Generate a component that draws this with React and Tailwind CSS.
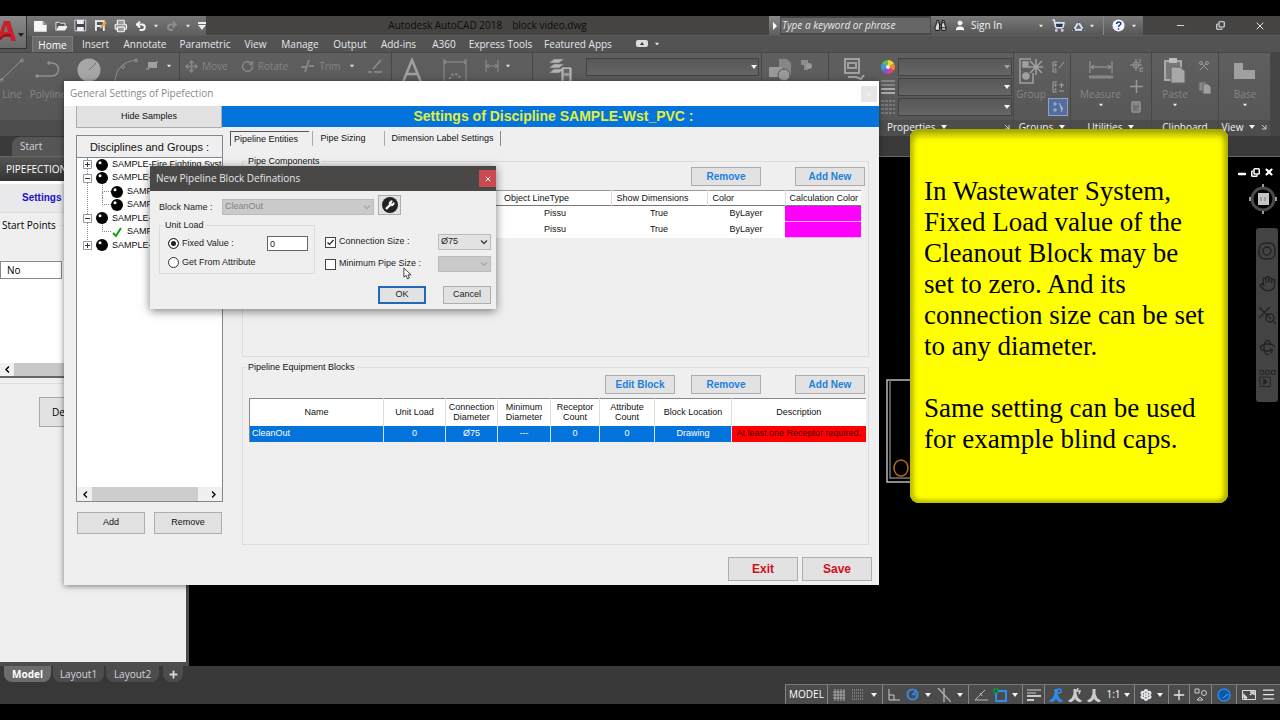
import { useState } from 'react'
import {
  Hand, Minus, X, Copy, Settings, Plus, Menu, Scissors, Files, Move, RotateCw,
  ShoppingCart, User, Binoculars, Calculator, Printer, Undo2, Redo2, Wrench, Rotate3d,
} from 'lucide-react'

const RIBBON_TABS = [
  ['Insert', 'w-[45px]'], ['Annotate', 'w-[54px]'], ['Parametric', 'w-[66px]'], ['View', 'w-[35px]'],
  ['Manage', 'w-[54px]'], ['Output', 'w-[46px]'], ['Add-ins', 'w-[51px]'], ['A360', 'w-[40px]'],
  ['Express Tools', 'w-[73px]'], ['Featured Apps', 'w-[82px]'],
]

const TREE = [
  { id: 1, label: 'SAMPLE-Fire Fighting System', box: '+' },
  { id: 2, label: 'SAMPLE-', box: '-' },
  { id: 3, label: 'SAMPLE', child: true },
  { id: 4, label: 'SAMPLE', child: true, last: true },
  { id: 5, label: 'SAMPLE-', box: '-' },
  { id: 6, label: 'SAMPLE', child: true, last: true, checked: true },
  { id: 7, label: 'SAMPLE-', box: '+' },
]

const BLOCK_COLUMNS = [
  ['Name', 'w-[134px]'], ['Unit Load', 'w-[62px]'], ['Connection Diameter', 'w-[52px]'],
  ['Minimum Diameter', 'w-[53px]'], ['Receptor Count', 'w-[49px]'], ['Attribute Count', 'w-[55px]'],
  ['Block Location', 'w-[77px]'], ['Description', 'w-[134px]'],
]

const BLOCK_ROW = ['CleanOut', '0', 'Ø75', '---', '0', '0', 'Drawing']

function Caret({ className = 'text-gray-100' }) {
  return (
    <svg viewBox="0 0 6 4" fill="currentColor" className={`w-[6px] h-[4px] shrink-0 ${className}`}>
      <path d="M0 0h6L3 4z" />
    </svg>
  )
}

function SmallCaret() {
  return <Caret className="text-gray-200 scale-75" />
}

function Chevron({ className = '' }) {
  return (
    <svg viewBox="0 0 8 5" fill="none" stroke="currentColor" strokeWidth="1.500" className={`w-[8px] h-[5px] ${className}`}>
      <path d="M1 .5l3 3 3-3" />
    </svg>
  )
}

function Corner() {
  return (
    <svg viewBox="0 0 6 6" fill="none" stroke="#ccc" className="w-[6px] h-[6px] shrink-0">
      <path d="M1 1l4 4M5 1v4H1" />
    </svg>
  )
}

/* ---------- title bar ---------- */

function TitleBar() {
  return (
    <header className="h-[20px] shrink-0 flex items-stretch bg-[#454442] border-b border-[#5c5c5c]">
      <div className="w-[27px]" />
      <div className="w-[179px] flex items-center pl-[7px] gap-[7px] bg-gradient-to-b from-[#777] to-[#5e5e5e] text-gray-100">
        <svg viewBox="0 0 14 12" className="w-[14px] h-[12px]"><path d="M0 1h9l4 4v7H0z" fill="#f5f5f5" /><path d="M9 1v4h4" fill="#999" /></svg>
        <svg viewBox="0 0 14 12" className="w-[13px] h-[12px]"><path d="M1 11V2h4l1 1h5v3" fill="#555" stroke="#eee" /><path d="M1 11l3-5h10l-3 5z" fill="#f0f0f0" /></svg>
        <svg viewBox="0 0 13 13" className="w-[13px] h-[13px]"><path d="M1 1h11v11H1z" fill="#3e4653" stroke="#d8d8d8" /><path d="M3 1h7v4H3zM3 8h7v4H3z" fill="#eee" /></svg>
        <svg viewBox="0 0 13 13" className="w-[13px] h-[13px]">
          <path d="M1 1h10v11H1z" fill="#e8e8e8" /><path d="M3 3h6v3H3zM3 8h6v4H3z" fill="#4b5563" />
          <path d="M6 8l5-6 2 2-5 5-2 1z" fill="#e8a43c" />
        </svg>
        <Printer className="w-[14px] h-[14px]" fill="#999" />
        <Undo2 className="w-[12px] h-[12px]" strokeWidth="4" />
        <SmallCaret />
        <Redo2 className="w-[12px] h-[12px] text-[#8c8c8c]" strokeWidth="4" />
        <SmallCaret />
        <svg viewBox="0 0 8 8" fill="#eee" className="w-[8px] h-[8px] shrink-0"><path d="M0 0h8v2H0zM0 3h8L4 8z" /></svg>
      </div>
      <div className="flex-1 flex items-center justify-center gap-[10px] text-[10px] text-[#0c0c0c] whitespace-nowrap">
        <span>Autodesk AutoCAD 2018</span>
        <span>block video.dwg</span>
      </div>
      <button aria-label="Expand search" className="w-[11px] bg-gradient-to-b from-[#8a8a8a] to-[#5e5e5e] flex items-center justify-center">
        <svg viewBox="0 0 4 8" fill="#fff" className="w-[4px] h-[8px]"><path d="M0 0l4 4-4 4z" /></svg>
      </button>
      <input
        aria-label="Search"
        placeholder="Type a keyword or phrase"
        className="w-[151px] my-px px-[1px] bg-[#666] border border-[#4a4a4a] text-[10px] italic placeholder:text-gray-200"
      />
      <div className="w-[212px] flex items-center pl-[3px] bg-gradient-to-b from-[#7a7a7a] to-[#565656] text-gray-100">
        <Binoculars className="w-[13px] h-[13px] text-[#222]" fill="#ddd" />
        <User className="w-[12px] h-[13px] ml-[7px]" fill="currentColor" />
        <button className="ml-[5px] text-[10px] whitespace-nowrap">Sign In</button>
        <span className="flex-1" />
        <SmallCaret />
        <ShoppingCart className="w-[13px] h-[13px] ml-[8px] text-[#dfe4f5]" strokeWidth="3" fill="#28355e" />
        <svg viewBox="0 0 14 12" fill="none" stroke="#dfe4f5" strokeWidth="2" className="w-[13px] h-[12px] ml-[7px]">
          <path d="M7 2L2 10h10z" /><path d="M7 1v2M1 10h2M11 10h2" stroke="#28355e" />
        </svg>
        <span className="ml-[4px]"><SmallCaret /></span>
        <span className="w-px self-stretch bg-[#888] ml-[8px]" />
        <svg viewBox="0 0 14 14" className="w-[13px] h-[13px] ml-[8px]">
          <circle cx="7" cy="7" r="6.500" fill="#f4f6ff" />
          <path d="M5 5.500c0-3 4.500-3 4.500-.5 0 1.500-2.500 1.500-2.500 3.500M7 10v1.500" fill="none" stroke="#1e3a8a" strokeWidth="1.600" />
        </svg>
        <span className="mx-[6px]"><SmallCaret /></span>
      </div>
      <div className="w-[137px] flex items-center justify-around pl-[17px] text-gray-200">
        <button aria-label="Minimize" className="w-[39px] flex justify-center"><Minus className="w-[11px] h-[11px]" /></button>
        <button aria-label="Restore" className="w-[39px] flex justify-center"><Copy className="w-[9px] h-[9px] -scale-x-100 rotate-180" strokeWidth="3" /></button>
        <button aria-label="Close" className="w-[39px] flex justify-center"><X className="w-[12px] h-[12px]" /></button>
      </div>
    </header>
  )
}

function RibbonTabs() {
  return (
    <nav className="h-[16px] shrink-0 flex items-stretch pl-[32px] bg-[#535353] text-[10px] text-gray-200 whitespace-nowrap">
      <button className="w-[41px] bg-[#6a6a6a] border border-b-0 border-[#7c7c7c] text-white leading-[14px]">Home</button>
      <div className="flex">
        {RIBBON_TABS.map(([label, width]) => (
          <button key={label} className={`${width} leading-[16px]`}>{label}</button>
        ))}
      </div>
      <div className="flex items-center pl-[17px] gap-[6px]">
        <svg viewBox="0 0 12 8" className="w-[12px] h-[8px]"><rect width="12" height="7" rx="2" fill="#ddd" /><path d="M4 5l2-3 2 3z" fill="#333" /></svg>
        <SmallCaret />
      </div>
    </nav>
  )
}

/* ---------- ribbon ---------- */

function Panel({ title, className, titleClass = 'justify-center px-[4px]', more = true, corner = false, children }) {
  return (
    <section className={`flex flex-col border-r border-[#474747] shrink-0 overflow-hidden ${className}`}>
      <div className="flex-1 flex items-start pt-[5px]">{children}</div>
      <div className={`h-[16px] flex items-center gap-[6px] bg-[#4d4d4d] text-[10px] leading-[14px] pb-[2px] text-gray-100 ${titleClass}`}>
        {title}
        {more && title && <Caret />}
        {corner && <span className="ml-auto"><Corner /></span>}
      </div>
    </section>
  )
}

function BigTool({ label, caret, className, children }) {
  return (
    <button className={`flex flex-col items-center shrink-0 text-[10px] leading-[14px] text-[#858585] ${className}`}>
      <span className="h-[29px] flex items-start">{children}</span>
      {label}
      {caret && <span className="h-[8px] flex items-center"><SmallCaret /></span>}
    </button>
  )
}

function SmallTool({ label, children }) {
  return (
    <button className="flex items-center gap-[4px] text-[10px] leading-[16px] text-[#858585]">
      {children}{label}
    </button>
  )
}

function RibbonSelect({ label, dim, className = '' }) {
  return (
    <div className={`relative h-[18px] ${className}`}>
      <select aria-label={label} className="appearance-none w-full h-full bg-gradient-to-b from-[#575757] to-[#666] border border-[#424242]" />
      <span className="absolute right-[2px] top-[7px] flex pointer-events-none"><Caret className={dim ? 'text-gray-400' : 'text-gray-100'} /></span>
    </div>
  )
}

function Ribbon() {
  return (
    <div className="h-[84px] shrink-0 flex bg-gradient-to-b from-[#5f5f5f] to-[#555] border-t border-[#474747]">
      <Panel title="" className="w-[180px]">
        <BigTool label="Line" className="w-[24px]">
          <svg viewBox="0 0 24 24" fill="none" stroke="#909090" className="w-[24px] h-[24px]"><path d="M1 22L22 2" /><circle cx="22" cy="2.500" r="1.500" /><circle cx="1.500" cy="22" r="1.500" /></svg>
        </BigTool>
        <BigTool label="Polyline" className="w-[48px]">
          <svg viewBox="0 0 26 24" fill="none" stroke="#909090" strokeWidth="1.500" className="w-[26px] h-[24px]"><path d="M1 18h16a6 6 0 0 0 0-13h-3" /><circle cx="2" cy="18" r="1" /><circle cx="14" cy="5" r="1" /></svg>
        </BigTool>
        <BigTool className="w-[34px]">
          <svg viewBox="0 0 24 24" className="w-[24px] h-[24px]"><circle cx="12" cy="12" r="11.500" fill="#a6a6a6" /><path d="M12 12l7-7" stroke="#777" /></svg>
        </BigTool>
        <BigTool className="w-[40px]">
          <svg viewBox="0 0 24 24" fill="none" stroke="#909090" className="w-[24px] h-[24px]"><path d="M1 23C2 10 10 3 23 2" /><circle cx="9" cy="9" r="1.500" /><circle cx="22" cy="2.500" r="1.500" /></svg>
        </BigTool>
        <div className="flex items-center gap-[8px] pt-[3px]">
          <svg viewBox="0 0 12 9" className="w-[12px] h-[9px]"><path d="M2 1h9v6H2z" fill="#a0a0a0" /><path d="M0 8h3M10 1h2" stroke="#aaa" /></svg>
          <SmallCaret />
        </div>
      </Panel>

      <Panel title="" className="w-[212px]">
        <div className="flex items-center pl-[5px] gap-[13px]">
          <SmallTool label="Move"><Move className="w-[13px] h-[13px]" strokeWidth="3" /></SmallTool>
          <SmallTool label="Rotate"><RotateCw className="w-[13px] h-[13px]" strokeWidth="3" /></SmallTool>
          <SmallTool label="Trim">
            <svg viewBox="0 0 14 12" fill="none" stroke="currentColor" strokeWidth="2" className="w-[14px] h-[12px]"><path d="M0 7h5M8 6h5M4 12L8 0" /></svg>
          </SmallTool>
          <span className="-ml-[5px]"><SmallCaret /></span>
          <svg viewBox="0 0 14 14" fill="none" stroke="#909090" strokeWidth="1.500" className="w-[14px] h-[14px] shrink-0"><path d="M0 13h4M6 13h8M5 10l8-9" /></svg>
        </div>
      </Panel>

      <Panel title="" className="w-[141px]">
        <BigTool className="w-[40px]">
          <svg viewBox="0 0 20 24" fill="none" stroke="#a0a0a0" strokeWidth="2.500" className="w-[20px] h-[24px]"><path d="M1 24L10 2l9 22M4 16h12" /></svg>
        </BigTool>
        <BigTool className="w-[46px]">
          <svg viewBox="0 0 24 24" fill="none" stroke="#909090" className="w-[24px] h-[24px]"><path d="M1 1v22M23 1v22M1 4h22M3 2L1 4l2 2M21 2l2 2-2 2" /><path d="M7 21a5 5 0 0 1 10 0" strokeWidth="2" strokeDasharray="2 2" /></svg>
        </BigTool>
        <div className="flex items-center gap-[6px] pt-[2px] pl-[7px]">
          <svg viewBox="0 0 14 12" fill="none" stroke="#909090" className="w-[14px] h-[12px]"><path d="M1 0v12M13 0v12M1 6h12M4 4L1 6l3 2M10 4l3 2-3 2" /></svg>
          <SmallCaret />
        </div>
      </Panel>

      <Panel title="" className="w-[229px]">
        <svg viewBox="0 0 24 26" className="w-[24px] h-[26px] ml-[15px] shrink-0">
          <path d="M6 1h10l-5 4H1zM6 6h10l-5 4H1zM6 11h10l-5 4H1z" fill="#b4b4b4" stroke="#666" strokeWidth=".5" />
          <path d="M14 10h9v15h-9z" fill="#999" stroke="#ccc" /><path d="M16 11h5v4h-5zM16 18h5v6h-5z" fill="#666" />
        </svg>
        <RibbonSelect label="Layer" className="flex-1 ml-[14px] mr-[2px]" />
      </Panel>

      <Panel title="" className="w-[67px]">
        <div className="flex items-start gap-[8px] pl-[6px] text-[#999]">
          <svg viewBox="0 0 24 24" fill="currentColor" className="w-[24px] h-[24px]"><path d="M11 1h8l4 4v12H11z" opacity=".7" /><path d="M1 9h13v10H1z" /><circle cx="16" cy="17" r="6" stroke="#5a5a5a" /></svg>
          <svg viewBox="0 0 12 12" fill="currentColor" className="w-[12px] h-[12px]"><path d="M1 2h7v5H1zM4 6h4v6H4z" opacity=".8" /><circle cx="9" cy="8" r="3" /></svg>
        </div>
      </Panel>

      <Panel title="Properties" corner className="w-[185px]" titleClass="pl-[58px] pr-[3px]">
        <div className="w-[52px] pl-[14px]">
          <svg viewBox="0 0 22 24" fill="none" stroke="#a0a0a0" strokeWidth="2" className="w-[22px] h-[24px]"><path d="M2 1h14v14H2zM5 5h8v5H5zM5 19h9M13 19l5 2 3-4" /></svg>
        </div>
        <div className="flex-1 flex flex-col gap-[2px] pr-[1px]">
          <div className="flex items-center gap-[3px]">
            <svg viewBox="0 0 14 14" className="w-[14px] h-[14px]">
              <path d="M7 7V0a7 7 0 0 1 6 3.500z" fill="#f1d13c" /><path d="M7 7l6-3.500a7 7 0 0 1 0 7z" fill="#ef8a2e" />
              <path d="M7 7l6 3.500A7 7 0 0 1 7 14z" fill="#d8418c" /><path d="M7 7v7a7 7 0 0 1-6-3.500z" fill="#8656c9" />
              <path d="M7 7l-6 3.500a7 7 0 0 1 0-7z" fill="#3a9be0" /><path d="M7 7L1 3.500A7 7 0 0 1 7 0z" fill="#62bd55" />
              <circle cx="7" cy="7" r="2" fill="#eee" />
            </svg>
            <RibbonSelect label="Object color" dim className="flex-1" />
          </div>
          <div className="flex items-center gap-[3px]">
            <svg viewBox="0 0 14 14" stroke="#aaa" className="w-[14px] h-[14px]"><path d="M0 1h14M0 5h14" /><path d="M0 9h14M0 13h14" strokeWidth="2" /></svg>
            <RibbonSelect label="Lineweight" className="flex-1" />
          </div>
          <div className="flex items-center gap-[3px]">
            <svg viewBox="0 0 14 14" stroke="#999" strokeDasharray="3 1" className="w-[14px] h-[14px]"><path d="M0 1h14M0 5h14M0 9h14M0 13h14" /></svg>
            <RibbonSelect label="Linetype" className="flex-1" />
          </div>
        </div>
      </Panel>

      <Panel title="Groups" className="w-[57px]">
        <BigTool label="Group" className="w-[34px]">
          <svg viewBox="0 0 24 26" fill="none" stroke="#a0a0a0" strokeWidth="1.500" className="w-[24px] h-[26px]"><path d="M12 1H1v24h13V15" /><path d="M4 4h5v5H4z" fill="#a0a0a0" /><circle cx="7" cy="18" r="3" fill="#a0a0a0" /><path d="M17 1v16M9 9h15M11 3l12 12M23 3L11 15" /></svg>
        </BigTool>
        <div className="flex flex-col gap-[2px] text-[#a0a0a0]">
          <button aria-label="Ungroup" className="w-[20px] h-[18px] flex items-center justify-center">
            <svg viewBox="0 0 12 12" stroke="currentColor" fill="none" className="w-[12px] h-[12px]"><path d="M5 1H1v10h4M3 3h1v2H3zM3 8h1v1H3zM12 1L7 7" /></svg>
          </button>
          <button aria-label="Group edit" className="w-[20px] h-[18px] flex items-center justify-center">
            <svg viewBox="0 0 12 12" stroke="currentColor" fill="none" className="w-[12px] h-[12px]"><path d="M5 1H1v10h4M3 3h1v2H3zM3 8h1v1H3zM7 4h5M9.500 2v5M7 10h5" /></svg>
          </button>
          <button aria-label="Group selection" className="w-[20px] h-[18px] flex items-center justify-center bg-[#566d9b] border border-[#8ba3d0]">
            <svg viewBox="0 0 12 12" stroke="#a9b7d4" fill="none" className="w-[12px] h-[12px]"><path d="M2 2h2v2H2zM2 8h2v2H2z" /><path d="M7 2l4 6H9l1 3" fill="#a9b7d4" /></svg>
          </button>
        </div>
      </Panel>

      <Panel title="Utilities" className="w-[81px]">
        <BigTool label="Measure" caret className="w-[59px]">
          <svg viewBox="0 0 24 24" fill="none" stroke="#a0a0a0" className="w-[24px] h-[24px]"><path d="M1 3v12M23 3v12M2 9h20M5 7L2 9l3 2M19 7l3 2-3 2" /><path d="M0 19h24" strokeWidth="3" stroke="#888" /></svg>
        </BigTool>
        <div className="flex flex-col gap-[8px] pt-[1px] text-[#999]">
          <svg viewBox="0 0 13 13" fill="none" stroke="currentColor" className="w-[13px] h-[13px]"><circle cx="6" cy="6" r="3" /><path d="M0 6h12M6 0v12M10 0v4M10 9h3v4h-3z" /></svg>
          <svg viewBox="0 0 13 13" fill="none" stroke="currentColor" strokeWidth="1.500" className="w-[13px] h-[13px]"><path d="M0 6.500h13M6.500 0v13" /></svg>
          <Calculator className="w-[12px] h-[12px]" strokeWidth="3" />
        </div>
      </Panel>

      <Panel title="Clipboard" more={false} className="w-[67px]">
        <BigTool label="Paste" caret className="w-[46px]">
          <svg viewBox="0 0 22 26" className="w-[22px] h-[26px]"><path d="M1 3h16v19H1z" fill="#777" stroke="#a8a8a8" strokeWidth="2" /><path d="M5 0h8v5H5z" fill="#bbb" /><path d="M7 9h9l5 4v12H7z" fill="#a8a8a8" stroke="#666" /></svg>
        </BigTool>
        <div className="flex flex-col gap-[9px] pt-[2px] text-[#999]">
          <Scissors className="w-[12px] h-[12px] rotate-90" strokeWidth="2" />
          <svg viewBox="0 0 13 13" stroke="#666" className="w-[13px] h-[13px]"><path d="M1 1h7v9H1z" fill="#888" /><path d="M5 3h5l3 3v7H5z" fill="#a0a0a0" /></svg>
        </div>
      </Panel>

      <Panel title="View" corner className="w-[52px]">
        <BigTool label="Base" caret className="w-[52px]">
          <svg viewBox="0 0 22 24" className="w-[22px] h-[24px]"><path d="M0 5h9v7h12v9H0z" fill="#a0a0a0" /></svg>
        </BigTool>
      </Panel>
      <div className="flex-1 bg-[#454545]" />
    </div>
  )
}

/* ---------- left palette ---------- */

function Palette() {
  return (
    <aside className="w-[189px] shrink-0 flex flex-col bg-[#efefef] border-r-[3px] border-b-[4px] border-[#4c4c4c] text-[10px] overflow-hidden">
      <h2 className="h-[24px] shrink-0 pl-[6px] leading-[24px] bg-gradient-to-b from-[#555] to-[#333] text-white">PIPEFECTION</h2>
      <div className="h-[31px] shrink-0 border-t-[3px] border-white bg-[#e9e9ec] pl-[22px]">
        <button className="font-bold text-[#1a10c8] font-['Liberation_Sans',sans-serif] leading-[28px]">Settings</button>
      </div>
      <div className="h-[49px] shrink-0 pt-[5px] border-t border-[#ddd]">
        <div className="flex items-center gap-[3px] pl-[2px]">Start Points <span className="flex-1 h-px bg-[#ddd]" /></div>
      </div>
      <div className="h-[117px] shrink-0 flex flex-col bg-white border-b-2 border-[#666]">
        <div className="h-[18px] w-[62px] shrink-0 border border-[#888] pl-[6px] leading-[16px]">No</div>
        <div className="flex-1" />
        <div className="h-[13px] flex bg-[#f0f0f0]">
          <span className="w-[14px] flex items-center justify-center"><Chevron className="rotate-90" /></span>
          <span className="flex-1 bg-[#c8c8c8]" />
        </div>
      </div>
      <div className="mt-[5px] border-t border-[#ddd] pt-[13px] pl-[39px]">
        <button className="h-[30px] w-[80px] bg-[#e2e2e2] border border-[#aaa] text-left pl-[12px]">De</button>
      </div>
    </aside>
  )
}

/* ---------- drawing area ---------- */

function NavBar() {
  return (
    <div className="w-[22px] h-[174px] rounded-[3px] bg-[#434343] text-[#242424] flex flex-col items-center justify-between py-[14px]">
      <svg viewBox="0 0 18 18" fill="none" stroke="currentColor" strokeWidth="1.500" className="w-[18px] h-[18px]"><rect x="1" y="1" width="16" height="16" rx="6" /><circle cx="9" cy="9" r="4" /></svg>
      <Hand className="w-[17px] h-[17px]" />
      <svg viewBox="0 0 18 18" fill="none" stroke="currentColor" strokeWidth="1.500" className="w-[18px] h-[18px]"><path d="M1 1l12 12M12 1L1 12" /><circle cx="12" cy="12" r="4" /><path d="M15 15l3 3" /></svg>
      <Rotate3d className="w-[17px] h-[17px]" />
      <svg viewBox="0 0 18 18" fill="none" stroke="currentColor" className="w-[17px] h-[18px]"><path d="M1 0h4v4H1zM7 0h4v4H7zM13 0h4v4h-4zM1 7h11v10H1z" /><path d="M5 9l4 3-4 3z" fill="currentColor" /></svg>
    </div>
  )
}

function Canvas() {
  return (
    <main className="relative flex-1 bg-black">
      <div className="flex flex-col items-end pt-[8px]">
        <div className="flex items-center gap-[4px] pr-[6px] text-white">
          <Minus className="w-[10px] h-[10px] mt-[4px]" strokeWidth="6" />
          <Copy className="w-[9px] h-[9px] -scale-x-100 rotate-180" strokeWidth="4" />
          <X className="w-[10px] h-[10px]" strokeWidth="5" />
        </div>
        <svg viewBox="0 0 28 30" fill="none" className="w-[28px] h-[30px] mt-[5px] mr-[3px]">
          <circle cx="14" cy="15" r="11" stroke="#4a4a4a" strokeWidth="3" />
          <rect x="9" y="9" width="11" height="12" fill="#c4c4c4" />
          <path d="M12 13v4M16 13v4" stroke="#777" />
          <path d="M14 0v3M14 27v3M1 13v4M27 13v4" stroke="#ccc" strokeWidth="1.500" />
        </svg>
        <div className="mt-[14px] mr-[2px]"><NavBar /></div>
      </div>
      <svg viewBox="0 0 60 105" fill="none" className="absolute left-[697px] top-[222px] w-[60px] h-[105px]">
        <path d="M60 1H1v102h59" stroke="#bbb" strokeWidth="1.500" /><path d="M4 1v98h56" stroke="#777" strokeWidth="1.500" />
        <ellipse cx="15" cy="89" rx="7" ry="8" stroke="#b5651d" strokeWidth="1.500" />
      </svg>
    </main>
  )
}

/* ---------- bottom bars ---------- */

function LayoutTabs() {
  return (
    <div className="h-[18px] shrink-0 flex bg-[#383838] text-[10px] text-gray-300">
      <button className="w-[47px] ml-[4px] rounded-b-lg bg-[#6c6c6c] font-bold text-white leading-[16px] mb-[2px]">Model</button>
      <button className="w-[51px] ml-[2px] rounded-b-lg bg-[#4c4c4c] leading-[16px] mb-[2px]">Layout1</button>
      <button className="w-[53px] ml-[2px] rounded-b-lg bg-[#4c4c4c] leading-[16px] mb-[2px]">Layout2</button>
      <button aria-label="New layout" className="w-[20px] ml-[4px] rounded-b-lg bg-[#4c4c4c] mb-[2px] flex items-center justify-center">
        <Plus className="w-[11px] h-[11px]" strokeWidth="4" />
      </button>
    </div>
  )
}

function StatusGroup({ className, children }) {
  return <div className={`flex items-center justify-around border-l border-[#858585] px-[2px] ${className}`}>{children}</div>
}

function Figure({ color, children }) {
  return (
    <svg viewBox="0 0 14 14" fill="none" stroke={color} strokeWidth="1.500" className="w-[14px] h-[14px]">
      <path d="M7 1v6M7 6l-2 5-4 3M7 6l2 5 4 3" strokeWidth="3" />{children}
    </svg>
  )
}

function StatusBar() {
  return (
    <footer className="h-[20px] shrink-0 flex justify-end bg-[#383838] text-gray-200 text-[10px]">
      <div className="flex bg-[#4b4b4b] border-t border-[#777]">
        <StatusGroup className="w-[42px]"><button className="text-white">MODEL</button></StatusGroup>
        <StatusGroup className="w-[55px]">
          <svg viewBox="0 0 12 12" stroke="#bbb" className="w-[12px] h-[12px]"><path d="M2 0v12M5 0v12M8 0v12M11 0v12M0 3h12M0 6h12M0 9h12" strokeWidth=".8" /></svg>
          <svg viewBox="0 0 12 12" stroke="#aaa" strokeDasharray="1 1" className="w-[12px] h-[12px]"><path d="M0 1h12M0 4h12M0 7h12M0 10h12" /></svg>
          <Caret />
        </StatusGroup>
        <StatusGroup className="w-[86px]">
          <svg viewBox="0 0 12 12" fill="none" stroke="#ccc" className="w-[12px] h-[12px]"><path d="M1 0v11h11M1 6h5v5" /></svg>
          <svg viewBox="0 0 14 14" fill="none" stroke="#2f8cf0" strokeWidth="2" className="w-[13px] h-[13px]"><circle cx="7" cy="7" r="5.500" /><path d="M7 7h4M7 7l4-4" strokeWidth="1.500" /></svg>
          <Caret />
          <svg viewBox="0 0 14 14" fill="none" stroke="#aaa" className="w-[14px] h-[14px]"><path d="M1 0l13 14M7 0v14" strokeWidth="1.500" /></svg>
          <Caret />
        </StatusGroup>
        <StatusGroup className="w-[54px]">
          <svg viewBox="0 0 14 12" fill="none" stroke="#bbb" className="w-[14px] h-[12px]"><path d="M14 11H1L11 1M6 4l2 3" /></svg>
          <svg viewBox="0 0 14 14" fill="none" className="w-[14px] h-[14px]"><path d="M3 3h10v10H3z" stroke="#2f8cf0" strokeWidth="2" /><path d="M1 1h4v4H1z" fill="#063" stroke="#1a4" /></svg>
          <Caret />
        </StatusGroup>
        <StatusGroup className="w-[22px]">
          <svg viewBox="0 0 14 12" stroke="#ccc" strokeWidth="2" className="w-[14px] h-[12px]"><path d="M0 1h14M0 4h9" strokeWidth="1" /><path d="M0 7h14M0 11h7" /></svg>
        </StatusGroup>
        <StatusGroup className="w-[90px]">
          <Figure color="#2f8cf0"><circle cx="10" cy="3" r="2" /></Figure>
          <Figure color="#ccc"><path d="M10 0l-1 3h3l-1 3" /></Figure>
          <Figure color="#ccc" />
          <button className="flex items-center gap-[3px] text-white">1:1 <Caret /></button>
        </StatusGroup>
        <StatusGroup className="w-[34px]">
          <Settings className="w-[12px] h-[12px]" strokeWidth="4" /><Caret />
        </StatusGroup>
        <StatusGroup className="w-[21px]"><Plus className="w-[16px] h-[16px]" strokeWidth="2" /></StatusGroup>
        <StatusGroup className="w-[22px]">
          <svg viewBox="0 0 13 13" fill="none" stroke="#ccc" className="w-[13px] h-[13px]"><path d="M1 1h4v4H1zM6 9l3 3H3z" /><circle cx="10" cy="5" r="2.500" /></svg>
        </StatusGroup>
        <StatusGroup className="w-[25px]">
          <svg viewBox="0 0 14 14" className="w-[14px] h-[14px]"><circle cx="7" cy="7" r="6" fill="#0b57a8" stroke="#2688ee" strokeWidth="1.500" /><path d="M6 10l5-4" stroke="#5eb0ff" /></svg>
        </StatusGroup>
        <StatusGroup className="w-[44px]">
          <svg viewBox="0 0 14 12" fill="none" stroke="#ddd" className="w-[14px] h-[12px]"><path d="M.5 1.500h13v9H.5z" /><path d="M8 3h4v3M12 3L8 6M2 9h3M2 9V6l3 3" strokeWidth="1.500" /></svg>
          <Menu className="w-[15px] h-[15px]" />
        </StatusGroup>
      </div>
    </footer>
  )
}

/* ---------- settings window ---------- */

function WinButton({ className = '', children, ...rest }) {
  return (
    <button className={`bg-[#e2e2e2] border border-[#adadad] ${className}`} {...rest}>{children}</button>
  )
}

function Tree() {
  return (
    <div className="h-[367px] w-[147px] flex flex-col border border-[#828790] bg-white overflow-hidden">
      <h3 className="h-[22px] shrink-0 bg-[#efefef] border-b border-[#828790] text-[11px] leading-[22px] text-center">Disciplines and Groups :</h3>
      <ul className="relative h-[94px] shrink-0 grid grid-rows-7">
        <li aria-hidden="true" className="absolute left-[10px] top-0 bottom-[6px] border-l border-dotted border-[#888]" />
        {TREE.map((node) => (
          <li key={node.id} className="relative flex items-center whitespace-nowrap">
            {node.child ? (
              <span className="self-stretch w-[34px] pl-[25px] flex flex-col">
                <span className="h-1/2 border-l border-b border-dotted border-[#888]" />
                {!node.last && <span className="h-1/2 border-l border-dotted border-[#888]" />}
              </span>
            ) : (
              <span className="w-[19px] pl-[6px]">
                <svg viewBox="0 0 9 9" fill="#fff" stroke="#999" className="w-[9px] h-[9px]">
                  <path d="M.5.5h8v8h-8z" /><path d={node.box === '+' ? 'M2 4.500h5M4.500 2v5' : 'M2 4.500h5'} stroke="#235" />
                </svg>
              </span>
            )}
            {node.checked ? (
              <svg viewBox="0 0 12 12" fill="none" stroke="#169b1c" strokeWidth="2" className="w-[12px] h-[12px]"><path d="M2 7l3 3 5-8" /></svg>
            ) : (
              <svg viewBox="0 0 12 12" className="w-[12px] h-[12px]"><circle cx="6" cy="6" r="6" /><circle cx="4" cy="3.800" r="1.500" fill="#fff" /></svg>
            )}
            <span className="ml-[4px]">{node.label}</span>
          </li>
        ))}
      </ul>
      <div className="flex-1" />
      <div className="h-[14px] flex bg-[#f0f0f0]">
        <button aria-label="Scroll left" className="w-[15px] flex items-center justify-center"><Chevron className="rotate-90" /></button>
        <span className="w-[106px] bg-[#cdcdcd]" />
        <span className="flex-1" />
        <button aria-label="Scroll right" className="w-[17px] flex items-center justify-center"><Chevron className="-rotate-90" /></button>
      </div>
    </div>
  )
}

function ComponentsTable() {
  const cell = 'h-[16px] p-0 text-center'
  return (
    <table className="table-fixed w-[612px] border-collapse bg-white border-t border-[#999]">
      <thead>
        <tr className="h-[15px] leading-[12px] border-b border-[#777] text-left">
          <th className="w-[250px] p-0" />
          <th className="w-[112px] p-0 pl-[5px] font-normal">Object LineType</th>
          <th className="w-[96px] p-0 pl-[5px] font-normal border-l border-[#ddd]">Show Dimensions</th>
          <th className="w-[78px] p-0 pl-[5px] font-normal border-l border-[#ddd]">Color</th>
          <th className="p-0 pl-[4px] font-normal border-l border-[#ddd] whitespace-nowrap">Calculation Color</th>
        </tr>
      </thead>
      <tbody>
        {[1, 2].map((n) => (
          <tr key={n}>
            <td className={cell} />
            <td className={cell}>Pissu</td>
            <td className={cell}>True</td>
            <td className={cell}>ByLayer</td>
            <td className={`${cell} bg-[#ff00ff] border-b border-[#ffb0ff]`} />
          </tr>
        ))}
      </tbody>
    </table>
  )
}

function BlocksTable() {
  return (
    <table className="table-fixed w-[616px] border-collapse border-t border-l border-[#888]">
      <thead>
        <tr className="h-[27px] bg-white">
          {BLOCK_COLUMNS.map(([label, width]) => (
            <th key={label} className={`${width} p-0 font-normal leading-[10px] border-r border-[#ddd] last:border-r-0`}>{label}</th>
          ))}
        </tr>
      </thead>
      <tbody>
        <tr className="h-[16px] bg-[#0473dc] text-white text-center">
          {BLOCK_ROW.map((value, i) => (
            <td key={i} className="p-0 border-r border-[#cfe3f8] first:text-left first:pl-[2px]">{value}</td>
          ))}
          <td className="p-0 bg-[#f00] text-[#4a0000] whitespace-nowrap">At least one Receptor required.</td>
        </tr>
      </tbody>
    </table>
  )
}

function Group({ title, className, children }) {
  return (
    <fieldset className={`border border-[#dcdcdc] min-w-0 ${className}`}>
      <legend className="ml-[3px] px-[2px] h-[12px] leading-[12px]">{title}</legend>
      {children}
    </fieldset>
  )
}

function SettingsWindow() {
  const action = 'w-[70px] h-[19px] text-[10px] font-bold text-[#2180dd]'
  const big = 'w-[70px] h-[24px] text-[12px] font-bold text-[#d01020]'
  return (
    <section className="absolute left-[64px] top-[81px] w-[815px] h-[504px] flex flex-col bg-[#efefef] shadow-[0_1px_6px_rgba(0,0,0,0.500)] font-['Liberation_Sans',sans-serif] text-[9px] text-[#111]">
      <header className="h-[25px] shrink-0 flex items-center justify-between bg-white pl-[6px] pr-[2px] font-['Open_Sans',sans-serif] text-[10px] text-[#888]">
        General Settings of Pipefection
        <button aria-label="Close window" className="w-[16px] h-[16px] bg-[#e6e6e6] text-white flex items-center justify-center"><X className="w-[8px] h-[8px]" /></button>
      </header>
      <div className="flex-1 flex">
        <div className="w-[158px] shrink-0 pl-[12px]">
          <WinButton className="w-full h-[22px] border-t-0">Hide Samples</WinButton>
          <div className="mt-[7px]"><Tree /></div>
          <div className="mt-[10px] pl-px flex justify-between">
            <WinButton className="w-[68px] h-[22px]">Add</WinButton>
            <WinButton className="w-[68px] h-[22px]">Remove</WinButton>
          </div>
        </div>
        <div className="flex-1 flex flex-col">
          <h2 className="h-[21px] bg-[#0473dc] text-center text-[14px] leading-[21px] font-bold text-[#e0ee40] pl-[6px]">
            Settings of Discipline SAMPLE-Wst_PVC :
          </h2>
          <div className="mt-[4px] flex h-[15px] pl-[8px] leading-[13px]">
            <button className="w-[79px] border-t border-l border-[#555] pr-[8px]">Pipeline Entities</button>
            <button className="w-[73px] ml-[3px] border-x border-x-[#aaa] pr-[11px]">Pipe Sizing</button>
            <button className="w-[116px] border-r border-[#888]">Dimension Label Settings</button>
          </div>
          <Group title="Pipe Components" className="ml-[20px] mr-[10px] mt-[9px] h-[202px]">
            <div className="flex justify-end gap-[34px] pr-[3px]">
              <WinButton className={action}>Remove</WinButton>
              <WinButton className={action}>Add New</WinButton>
            </div>
            <div className="mt-[4px] ml-[6px]"><ComponentsTable /></div>
          </Group>
          <Group title="Pipeline Equipment Blocks" className="ml-[20px] mr-[10px] mt-[4px] h-[184px]">
            <div className="flex justify-end pr-[3px] pt-[2px]">
              <WinButton className={`${action} mr-[16px]`}>Edit Block</WinButton>
              <WinButton className={`${action} mr-[34px]`}>Remove</WinButton>
              <WinButton className={action}>Add New</WinButton>
            </div>
            <div className="mt-[4px] ml-[6px]"><BlocksTable /></div>
          </Group>
          <div className="mt-[12px] flex justify-end gap-[4px] pr-[7px]">
            <WinButton className={big}>Exit</WinButton>
            <WinButton className={big}>Save</WinButton>
          </div>
        </div>
      </div>
    </section>
  )
}

/* ---------- block dialog ---------- */

function WinSelect({ label, value, disabled, className }) {
  return (
    <div className={`relative h-[16px] ${className}`}>
      <select
        aria-label={label}
        disabled={disabled}
        className="appearance-none block w-full h-full pl-[2px] border border-[#bbb] bg-[#e2e2e2] disabled:bg-[#cacaca] disabled:text-[#838383] disabled:opacity-100"
      >
        <option>{value}</option>
      </select>
      <Chevron className={`absolute right-[3px] top-[6px] pointer-events-none ${disabled ? 'text-[#aaa]' : 'text-[#444]'}`} />
    </div>
  )
}

function Radio({ label, checked, onChange }) {
  return (
    <label className="flex items-center gap-[3px] h-[19px]">
      <input
        type="radio"
        name="load"
        checked={checked}
        onChange={onChange}
        className="appearance-none w-[11px] h-[11px] rounded-full border border-[#333] bg-white checked:bg-[#222] checked:shadow-[inset_0_0_0_2px_white]"
      />
      {label}
    </label>
  )
}

function Check({ label, checked, onChange }) {
  return (
    <label className="relative flex items-center gap-[3px] flex-1">
      <input
        type="checkbox"
        checked={checked}
        onChange={onChange}
        className="appearance-none w-[11px] h-[11px] border border-[#444] bg-white"
      />
      {checked && (
        <svg viewBox="0 0 11 11" fill="none" stroke="#222" strokeWidth="1.200" className="absolute left-0 w-[11px] h-[11px]"><path d="M2.500 5.500l2 2 4-4.500" /></svg>
      )}
      {label}
    </label>
  )
}

function BlockDialog() {
  const [load, setLoad] = useState('fixed')
  const [connection, setConnection] = useState(true)
  const [minimum, setMinimum] = useState(false)

  return (
    <section className="absolute left-[150px] top-[166px] w-[346px] h-[143px] bg-[#efefef] shadow-[0_2px_9px_rgba(0,0,0,0.500)] font-['Liberation_Sans',sans-serif] text-[9px] text-[#222]">
      <header className="h-[25px] flex items-center justify-between bg-[#4a4846] pl-[6px] font-['Open_Sans',sans-serif] text-[10px] text-gray-200">
        New Pipeline Block Definations
        <button aria-label="Close dialog" className="w-[17px] h-[17px] bg-[#c94a4f] text-white flex items-center justify-center"><X className="w-[8px] h-[8px]" strokeWidth="3" /></button>
      </header>
      <div className="flex items-end pl-[9px] pt-[4px]">
        <span className="w-[63px] leading-[16px]">Block Name :</span>
        <WinSelect label="Block Name" value="CleanOut" disabled className="w-[152px]" />
        <WinButton aria-label="Pick block" className="w-[23px] h-[20px] ml-[4px] flex items-center justify-center">
          <span className="w-[16px] h-[16px] rounded-full bg-[#222] text-white flex items-center justify-center"><Wrench className="w-[10px] h-[10px]" fill="currentColor" /></span>
        </WinButton>
      </div>
      <div className="flex pl-[9px]">
        <Group title="Unit Load" className="mt-[4px] w-[156px] h-[55px]">
          <div className="pl-[8px] pr-[6px] pt-[3px]">
            <div className="flex items-center justify-between">
              <Radio label="Fixed Value :" checked={load === 'fixed'} onChange={() => setLoad('fixed')} />
              <input aria-label="Fixed value" defaultValue="0" className="w-[41px] h-[15px] px-[2px] bg-white border border-[#666]" />
            </div>
            <Radio label="Get From Attribute" checked={load === 'attribute'} onChange={() => setLoad('attribute')} />
          </div>
        </Group>
        <div className="flex-1 pl-[10px] pr-[5px] pt-[19px] flex flex-col gap-[6px]">
          <div className="flex items-center">
            <Check label="Connection Size :" checked={connection} onChange={() => setConnection(!connection)} />
            <WinSelect label="Connection Size" value="Ø75" className="w-[53px]" />
          </div>
          <div className="flex items-center">
            <Check label="Minimum Pipe Size :" checked={minimum} onChange={() => setMinimum(!minimum)} />
            <WinSelect label="Minimum Pipe Size" value="" disabled className="w-[53px]" />
          </div>
        </div>
      </div>
      <div className="flex justify-end gap-[17px] pr-[5px] mt-[12px]">
        <button className="w-[48px] h-[18px] bg-[#e2e2e2] border-2 border-[#2468b8]">OK</button>
        <WinButton className="w-[48px] h-[18px]">Cancel</WinButton>
      </div>
      <svg viewBox="0 0 10 14" fill="#fff" stroke="#333" className="absolute left-[253px] top-[101px] w-[9px] h-[13px]">
        <path d="M1 1v10l2.500-2 1.500 4 2-1-1.500-3.500H9z" />
      </svg>
    </section>
  )
}

function Note() {
  return (
    <aside className="absolute left-[910px] top-[129px] w-[318px] h-[374px] rounded-[9px] bg-[#ff0] pt-[47px] pl-[14px] pr-[8px] font-['Liberation_Serif',serif] text-[27px] leading-[31px] text-black shadow-[inset_0_9px_7px_-3px_#a6a600,inset_-4px_0_5px_#b4b400,inset_4px_0_5px_#c4c400,inset_0_-3px_4px_#c8c800]">
      <p>In Wastewater System,<br />Fixed Load value of the<br />Cleanout Block may be<br />set to zero. And its<br />connection size can be set<br />to any diameter.</p>
      <p className="mt-[31px]">Same setting can be used<br />for example blind caps.</p>
    </aside>
  )
}

export default function App() {
  return (
    <div className="relative h-screen flex flex-col overflow-hidden bg-black py-4 font-['Open_Sans',sans-serif]">
      <TitleBar />
      <RibbonTabs />
      <Ribbon />
      <div className="h-[21px] shrink-0 flex items-end bg-[#3a3a3a] border-b border-[#666] pl-[12px]">
        <button className="w-[100px] h-[19px] rounded-tl-lg bg-[#565656] text-[10px] text-gray-300 text-left pl-[8px]">Start</button>
      </div>
      <div className="flex-1 min-h-0 flex">
        <Palette />
        <Canvas />
      </div>
      <LayoutTabs />
      <StatusBar />

      <button aria-label="Application menu" className="absolute left-0 top-[16px] w-[27px] h-[33px] flex items-center bg-gradient-to-b from-[#8a8a8a] to-[#6a6a6a] border-r border-b border-[#333]">
        <svg viewBox="0 0 18 24" className="w-[18px] h-[24px]">
          <path d="M0 12L4 1h6l6 20h-5l-1-4H3l-3 4z" fill="#c9202a" /><path d="M4 12h4L6 5z" fill="#777" /><path d="M0 19q5-6 11-3" fill="none" stroke="#8e1118" strokeWidth="2" />
        </svg>
        <Caret className="text-[#222] mt-[6px]" />
      </button>
      <SettingsWindow />
      <BlockDialog />
      <Note />
    </div>
  )
}
